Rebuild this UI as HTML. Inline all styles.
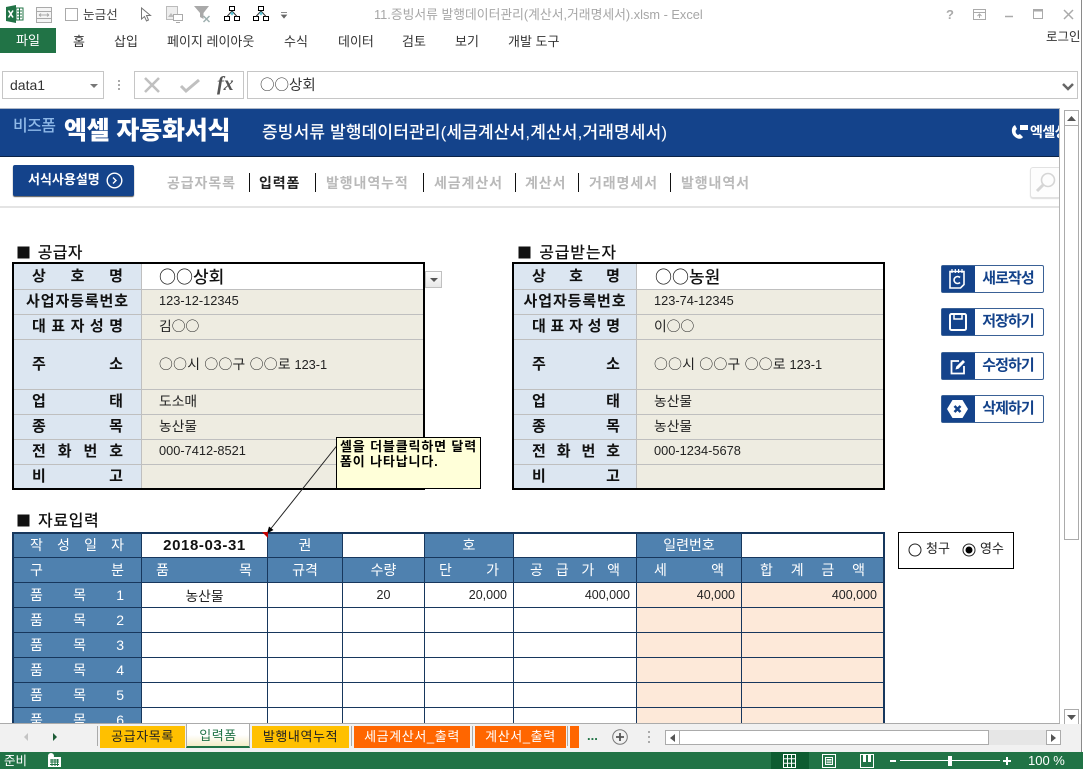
<!DOCTYPE html>
<html lang="ko"><head><meta charset="utf-8"><title>Excel</title>
<style>
html,body{margin:0;padding:0;width:1083px;height:769px;overflow:hidden;background:#fff}
body{position:relative;font-family:"Liberation Sans","Noto Sans CJK KR",sans-serif;font-size:12px;color:#222}
.a{position:absolute;white-space:nowrap}
.k{font-family:"Noto Sans CJK KR",sans-serif}
svg{position:absolute;overflow:visible}
.rb{top:34px;font-size:13px;color:#333;line-height:16px}
.nv{top:174px;font-size:14px;font-weight:700;color:#b9b9b9;letter-spacing:.9px;line-height:18px}
.sp{top:173px;width:1px;height:19px;background:#111}
.sec{font-size:16px;font-weight:500;color:#111;line-height:18px;letter-spacing:.3px}
.sec .k{font-size:15px;margin-right:2px;margin-left:-1px;letter-spacing:0}
table{border-collapse:separate;border-spacing:0;table-layout:fixed;position:absolute}
.t1{left:12px;top:262px;width:413px;height:228px;box-sizing:border-box;border:2px solid #000;overflow:hidden;position:absolute;background:#eeece1}
.t1 table{left:0;top:0}
.t1 td{box-sizing:border-box;border-bottom:1px solid #bfbfbf;padding:0;font-size:12.800px;line-height:16px;color:#222}
.t1 td .k{font-size:13.800px;line-height:16px}
.t1 td.l{background:#dce6f1;border-right:1px solid #bfbfbf;font-size:15px;font-weight:700;color:#111;text-align:justify;text-align-last:justify}
.t1 td.l.c{text-align:center;text-align-last:center;padding:0!important;letter-spacing:.9px}
.t1 td.v{padding:0 0 2px 17px}
.t1 td.b{background:#fff;font-size:17px;font-weight:500;color:#111;font-family:"Noto Sans CJK KR",sans-serif}
.t3w{left:12px;top:532px;width:873px;height:192px;overflow:hidden;position:absolute}
.t3{left:0;top:0;border:solid #17375d;border-width:2px 2px 0 2px}
.t3 td{box-sizing:border-box;height:25px;border-right:1px solid #17375d;border-bottom:1px solid #17375d;padding:0 0 1px;font-size:12.500px;color:#222;text-align:center;background:#fff}
.t3 tr:first-child td{height:24px}
.t3 td:last-child{border-right:0}
.t3 td.h{background:#4f81af;color:#fff;font-size:14px}
.t3 td.j{text-align:justify;text-align-last:justify;padding:0 17px 1px 16px;letter-spacing:0}
.t3 td.s{text-align:justify;text-align-last:justify;padding:0 15px 1px 14px}
.t3 td.r{text-align:right;padding-right:6px}
.t3 td.p{background:#fde9d9}
.btn{left:941px;width:103px;height:28px;box-sizing:border-box;border:1px solid #3a6196;border-radius:2px;background:#fff}
.btn i{position:absolute;left:0;top:0;width:33px;height:26px;background:#14438b;display:block}
.btn b{position:absolute;left:33px;right:0;top:0;line-height:25px;text-align:center;font-size:15px;font-weight:700;color:#14438b;letter-spacing:-.9px;padding-right:2px}
.tab{top:726px;height:22px;line-height:21px;text-align:center;font-size:13px;letter-spacing:.6px}
.y{background:#ffc000;color:#222}.o{background:#ff6600;color:#fff}
.sb{background:#fff;border:1px solid #ababab;box-sizing:border-box}
</style></head><body>

<!-- title bar -->
<svg style="left:6px;top:5px" width="18" height="18" viewBox="0 0 18 18"><path d="M0 2 10 0v18L0 16z" fill="#217346"/><path d="M10 3h7v12h-7z" fill="#fff" stroke="#217346"/><path d="M11 6h5M11 9h5M11 12h5M13.500 3v12" stroke="#217346" fill="none"/><path d="M2.500 5.500 7 12.500M7 5.500 2.500 12.500" stroke="#fff" stroke-width="1.600"/></svg>
<svg style="left:36px;top:7px" width="16" height="16" viewBox="0 0 16 16"><path d="M.5.5h15v15H.5z" fill="#f5f5f5" stroke="#aaa"/><path d="M.5 4.500h15M.5 11.500h15M3 8h10M3 8l2-1.500M3 8l2 1.500M13 8l-2-1.500M13 8l-2 1.500" stroke="#aaa" fill="none"/></svg>
<div class="a" style="left:65px;top:8px;width:13px;height:13px;box-sizing:border-box;border:1px solid #aaa;background:#fff"></div>
<div class="a" style="left:83px;top:7px;font-size:12.600px;line-height:16px;color:#444">눈금선</div>
<svg style="left:140px;top:7px" width="12" height="16" viewBox="0 0 12 16"><path d="M1.500 1v11l3-2.500 2 4.500 2-1-2-4.500h4z" fill="#fff" stroke="#777"/></svg>
<svg style="left:166px;top:6px" width="17" height="17" viewBox="0 0 17 17"><path d="M.5.5h11v13H.5z" fill="#eee" stroke="#bbb"/><path d="M2 11l3-4 3 4z" fill="#bbb"/><path d="M7.500 8.500h9v6h-9z" fill="#fff" stroke="#aaa"/><path d="M10 16.500h4" stroke="#aaa"/></svg>
<svg style="left:194px;top:6px" width="17" height="17" viewBox="0 0 17 17"><path d="M0 0h15l-5.500 7v6L6 11V7z" fill="#a9a9a9"/><path d="M9.500 10l6 6M15.500 10l-6 6" stroke="#9fb0b0" stroke-width="1.500"/></svg>
<svg style="left:224px;top:6px" width="16" height="15" viewBox="0 0 16 15"><g fill="#fff" stroke="#000"><path d="M5.500.5h5v4h-5zM.5 10.500h5v4h-5zM10.500 10.500h5v4h-5z"/></g><path d="M8 5 3 10.500M8 5l5 5.500" stroke="#333" fill="none"/><path d="M8 5.500l2 2-2 2-2-2z" fill="#5fc4d6"/></svg>
<svg style="left:253px;top:6px" width="16" height="15" viewBox="0 0 16 15"><g fill="#fff" stroke="#000"><path d="M5.500.5h5v4h-5zM.5 10.500h5v4h-5zM10.500 10.500h5v4h-5z"/></g><path d="M8 5 3 10.500M8 5l5 5.500" stroke="#333" fill="none"/><path d="M8 5.500l2 2-2 2-2-2z" fill="#5fc4d6"/></svg>
<svg style="left:281px;top:12px" width="6" height="7" viewBox="0 0 6 7"><path d="M0 .5h6M.5 3h5L3 6z" stroke="#666" stroke-width=".8" fill="#666"/></svg>
<div class="a" style="left:374px;top:7px;font-size:12.800px;line-height:16px;color:#a6a6a6">11.증빙서류 발행데이터관리(계산서,거래명세서).xlsm - Excel</div>
<svg style="left:945px;top:8px" width="128" height="14" viewBox="0 0 128 14" fill="none" stroke="#aaa"><text x="1" y="11" font-size="13" font-weight="700" fill="#aaa" stroke="none" font-family="Liberation Sans">?</text><path d="M28.500 1.500h12v10h-12zM28.500 4.500h12M34.500 10V6M32.500 8l2-2 2 2"/><path d="M60 8.500h8" stroke-width="1.500"/><path d="M88.500 1.500h9v9h-9z"/><path d="M88 2.500h10" stroke-width="2"/><path d="M119 2l9 9M128 2l-9 9" stroke-width="1.500"/></svg>

<!-- ribbon tabs -->
<div class="a" style="left:0;top:28px;width:56px;height:25px;background:#217346;color:#fff;text-align:center;line-height:25px;font-size:13px">파일</div>
<div class="a rb" style="left:73px">홈</div>
<div class="a rb" style="left:114px">삽입</div>
<div class="a rb" style="left:167px">페이지 레이아웃</div>
<div class="a rb" style="left:284px">수식</div>
<div class="a rb" style="left:338px">데이터</div>
<div class="a rb" style="left:402px">검토</div>
<div class="a rb" style="left:455px">보기</div>
<div class="a rb" style="left:508px">개발 도구</div>
<div class="a" style="left:1046px;top:29px;font-size:12.500px;line-height:16px;color:#333">로그인</div>
<div class="a" style="left:1081px;top:0;width:1px;height:769px;background:#8a8a8a"></div>

<!-- formula bar -->
<div class="a" style="left:2px;top:71px;width:102px;height:28px;box-sizing:border-box;border:1px solid #c6c6c6;background:#fff;font-size:14px;line-height:26px;padding-left:7px;color:#333">data1</div>
<svg style="left:90px;top:84px" width="8" height="4" viewBox="0 0 8 4"><path d="M0 0h8L4 4z" fill="#777"/></svg>
<div class="a" style="left:118px;top:80px;width:2px;height:11px;background:repeating-linear-gradient(#aaa 0 2px,transparent 2px 4px)"></div>
<div class="a" style="left:134px;top:71px;width:110px;height:28px;box-sizing:border-box;border:1px solid #c6c6c6;background:#fff"></div>
<svg style="left:143px;top:77px" width="18" height="16" viewBox="0 0 18 16"><path d="M2 1l14 14M16 1 2 15" stroke="#c0c0c0" stroke-width="2.600" fill="none"/></svg>
<svg style="left:180px;top:78px" width="20" height="15" viewBox="0 0 20 15"><path d="M1 8l5 5L19 2" stroke="#c0c0c0" stroke-width="3" fill="none"/></svg>
<div class="a" style="left:217px;top:70px;font-family:'Liberation Serif',serif;font-style:italic;font-weight:700;font-size:20px;line-height:28px;color:#555">fx</div>
<div class="a k" style="left:247px;top:71px;width:831px;height:28px;box-sizing:border-box;border:1px solid #c6c6c6;background:#fff;font-size:14.500px;line-height:25px;padding-left:12px;color:#333">○○상회</div>
<svg style="left:1062px;top:83px" width="12" height="8" viewBox="0 0 12 8"><path d="M1 1l5 5 5-5" stroke="#666" stroke-width="2.500" fill="none"/></svg>

<!-- sheet header -->
<div class="a" style="left:0;top:108px;width:1059px;height:1px;background:#aeb8c8"></div>
<div class="a" style="left:0;top:109px;width:1059px;height:48px;background:#14438b;overflow:hidden">
  <div class="a" style="left:13px;top:8px;font-size:16px;font-weight:500;color:#8fb9e8;line-height:20px;letter-spacing:-.6px">비즈폼</div>
  <div class="a" style="left:64px;top:4px;font-size:25px;font-weight:900;color:#fff;line-height:36px;letter-spacing:-.2px">엑셀 자동화서식</div>
  <div class="a" style="left:262px;top:13px;font-size:17px;font-weight:500;color:#fff;line-height:22px;letter-spacing:.15px">증빙서류 발행데이터관리(세금계산서,계산서,거래명세서)</div>
  <svg style="left:1010px;top:15px" width="19" height="17" viewBox="0 0 19 17"><path d="M5 1C1 3 1 9 4 12s7 4 9 1l-3-3-2 1C6 10 5 8 6 6l1-1z" fill="#fff"/><path d="M10 1h8v5h-8z" fill="#fff"/></svg>
  <div class="a" style="left:1030px;top:12px;font-size:14px;font-weight:700;color:#fff;line-height:22px;letter-spacing:-.5px">엑셀상담</div>
</div>
<div class="a" style="left:0;top:156px;width:1059px;height:1px;background:#0b2347"></div>

<!-- nav -->
<div class="a" style="left:13px;top:165px;width:121px;height:31px;border-radius:2px;background:#14438b;box-shadow:0 1px 1px #555;color:#fff;font-size:13px;font-weight:700;line-height:29px;padding-left:15px;box-sizing:border-box;letter-spacing:0">서식사용설명</div>
<svg style="left:106px;top:172px" width="17" height="17" viewBox="0 0 17 17"><circle cx="8.500" cy="8.500" r="7.300" fill="none" stroke="#fff" stroke-width="1.400"/><path d="M7 5.500l3 3-3 3" fill="none" stroke="#fff" stroke-width="1.400"/></svg>
<div class="a nv" style="left:167px">공급자목록</div><div class="a sp" style="left:249px"></div>
<div class="a nv" style="left:259px;color:#222">입력폼</div><div class="a sp" style="left:315px"></div>
<div class="a nv" style="left:326px">발행내역누적</div><div class="a sp" style="left:423px"></div>
<div class="a nv" style="left:434px">세금계산서</div><div class="a sp" style="left:515px"></div>
<div class="a nv" style="left:525px">계산서</div><div class="a sp" style="left:578px"></div>
<div class="a nv" style="left:589px">거래명세서</div><div class="a sp" style="left:670px"></div>
<div class="a nv" style="left:681px">발행내역서</div>
<div class="a" style="left:1030px;top:167px;width:29px;height:31px;box-sizing:border-box;border:1px solid #e2e2e2;border-right:0;border-radius:3px 0 0 3px;box-shadow:0 1px 1px #ddd;background:#fdfdfd"></div>
<svg style="left:1036px;top:172px" width="20" height="21" viewBox="0 0 20 21"><circle cx="12" cy="8" r="6.500" fill="none" stroke="#d5d5d5" stroke-width="1.600"/><path d="M7 13l-6 6" stroke="#d5d5d5" stroke-width="3"/></svg>
<div class="a" style="left:0;top:206px;width:1059px;height:2px;background:#e4e4e4"></div>

<!-- supplier -->
<div class="a sec" style="left:17px;top:244px"><span class="k">■</span> 공급자</div>
<div class="t1">
<table style="width:409px"><colgroup><col style="width:128px"><col></colgroup>
<tr style="height:26px"><td class="l" style="padding:0 18px">상 호 명</td><td class="v b">○○상회</td></tr>
<tr style="height:25px"><td class="l c">사업자등록번호</td><td class="v">123-12-12345</td></tr>
<tr style="height:25px"><td class="l" style="padding:0 18px">대 표 자 성 명</td><td class="v"><span class="k">김○○</span></td></tr>
<tr style="height:50px"><td class="l" style="padding:0 18px">주 소</td><td class="v"><span class="k" style="letter-spacing:.3px">○○시 ○○구 ○○로</span> 123-1</td></tr>
<tr style="height:25px"><td class="l" style="padding:0 18px">업 태</td><td class="v"><span class="k">도소매</span></td></tr>
<tr style="height:25px"><td class="l" style="padding:0 18px">종 목</td><td class="v"><span class="k">농산물</span></td></tr>
<tr style="height:25px"><td class="l" style="padding:0 18px">전 화 번 호</td><td class="v">000-7412-8521</td></tr>
<tr style="height:23px"><td class="l" style="padding:0 18px;border-bottom:0">비 고</td><td class="v" style="border-bottom:0"></td></tr>
</table></div>
<div class="a" style="left:425px;top:271px;width:17px;height:17px;box-sizing:border-box;border:1px solid #c0c0c0;background:linear-gradient(#fff,#e8e8e8)"></div>
<svg style="left:430px;top:278px" width="8" height="4" viewBox="0 0 8 4"><path d="M0 0h8L4 4z" fill="#555"/></svg>

<!-- receiver -->
<div class="a sec" style="left:518px;top:244px;letter-spacing:.8px"><span class="k">■</span> 공급받는자</div>
<div class="t1" style="left:512px;width:373px">
<table style="width:369px"><colgroup><col style="width:123px"><col></colgroup>
<tr style="height:26px"><td class="l" style="padding:0 16px 0 18px">상 호 명</td><td class="v b" style="padding-left:18px">○○농원</td></tr>
<tr style="height:25px"><td class="l c">사업자등록번호</td><td class="v">123-74-12345</td></tr>
<tr style="height:25px"><td class="l" style="padding:0 16px 0 18px">대 표 자 성 명</td><td class="v"><span class="k">이○○</span></td></tr>
<tr style="height:50px"><td class="l" style="padding:0 16px 0 18px">주 소</td><td class="v"><span class="k" style="letter-spacing:.3px">○○시 ○○구 ○○로</span> 123-1</td></tr>
<tr style="height:25px"><td class="l" style="padding:0 16px 0 18px">업 태</td><td class="v"><span class="k">농산물</span></td></tr>
<tr style="height:25px"><td class="l" style="padding:0 16px 0 18px">종 목</td><td class="v"><span class="k">농산물</span></td></tr>
<tr style="height:25px"><td class="l" style="padding:0 16px 0 18px">전 화 번 호</td><td class="v">000-1234-5678</td></tr>
<tr style="height:23px"><td class="l" style="padding:0 16px 0 18px;border-bottom:0">비 고</td><td class="v" style="border-bottom:0"></td></tr>
</table></div>

<!-- side buttons -->
<div class="a btn" style="top:265px"><i></i><b>새로작성</b></div>
<svg style="left:948px;top:268px" width="19" height="22" viewBox="0 0 19 22" fill="none" stroke="#fff" stroke-width="1.600"><path d="M2 3.500h14v13l-3.500 3.500H2z"/><path d="M4 1v4M7.300 1v4M10.600 1v4M14 1v4" stroke-width="1.200"/><path d="M12 9.500a3.500 3.500 0 1 0 0 5"/></svg>
<div class="a btn" style="top:308px"><i></i><b>저장하기</b></div>
<svg style="left:949px;top:313px" width="18" height="18" viewBox="0 0 18 18" fill="none" stroke="#fff" stroke-width="2"><path d="M1 2.500A1.500 1.500 0 0 1 2.500 1h13A1.500 1.500 0 0 1 17 2.500v13a1.500 1.500 0 0 1-1.500 1.500h-13A1.500 1.500 0 0 1 1 15.500z"/><path d="M5 1v5h8V1" stroke-width="1.500"/></svg>
<div class="a btn" style="top:352px"><i></i><b>수정하기</b></div>
<svg style="left:950px;top:358px" width="17" height="17" viewBox="0 0 17 17" fill="none" stroke="#fff" stroke-width="1.800"><path d="M9 3H1.500v12.500H14V8"/><path d="M5.500 11.500l.8-3L13 2l2 2-6.500 6.700z" fill="#fff" stroke="none"/></svg>
<div class="a btn" style="top:395px"><i></i><b>삭제하기</b></div>
<svg style="left:947px;top:400px" width="21" height="18" viewBox="0 0 21 18"><path d="M5.500 0h10L21 9l-5.500 9h-10L0 9z" fill="#fff"/><path d="M7.500 6l6 6M13.500 6l-6 6" stroke="#14438b" stroke-width="2.600"/></svg>

<!-- data table -->
<div class="a sec" style="left:17px;top:512px;letter-spacing:.6px"><span class="k">■</span> 자료입력</div>
<div class="t3w">
<table class="t3" style="width:873px"><colgroup><col style="width:128px"><col style="width:126px"><col style="width:75px"><col style="width:82px"><col style="width:89px"><col style="width:123px"><col style="width:105px"><col></colgroup>
<tr><td class="h j">작 성 일 자</td><td style="font-size:15px;font-weight:700;color:#111;letter-spacing:.6px">2018-03-31</td><td class="h">권</td><td></td><td class="h">호</td><td></td><td class="h">일련번호</td><td></td></tr>
<tr><td class="h j">구 분</td><td class="h s">품 목</td><td class="h">규격</td><td class="h">수량</td><td class="h s" style="padding:0 14px 1px">단 가</td><td class="h s" style="padding:0 16px 1px">공 급 가 액</td><td class="h s" style="padding:0 17px 1px">세 액</td><td class="h s" style="padding:0 18px 1px">합 계 금 액</td></tr>
<tr><td class="h j">품 목 1</td><td style="font-size:13.800px">농산물</td><td></td><td>20</td><td class="r">20,000</td><td class="r">400,000</td><td class="r p">40,000</td><td class="r p">400,000</td></tr>
<tr><td class="h j">품 목 2</td><td></td><td></td><td></td><td></td><td></td><td class="p"></td><td class="p"></td></tr>
<tr><td class="h j">품 목 3</td><td></td><td></td><td></td><td></td><td></td><td class="p"></td><td class="p"></td></tr>
<tr><td class="h j">품 목 4</td><td></td><td></td><td></td><td></td><td></td><td class="p"></td><td class="p"></td></tr>
<tr><td class="h j">품 목 5</td><td></td><td></td><td></td><td></td><td></td><td class="p"></td><td class="p"></td></tr>
<tr><td class="h j">품 목 6</td><td></td><td></td><td></td><td></td><td></td><td class="p"></td><td class="p"></td></tr>
</table></div>

<!-- radio group -->
<div class="a" style="left:898px;top:532px;width:116px;height:37px;box-sizing:border-box;border:1px solid #000;background:#fff"></div>
<svg style="left:908px;top:543px" width="70" height="14" viewBox="0 0 70 14"><circle cx="7" cy="7" r="6" fill="#fff" stroke="#222"/><circle cx="61" cy="7" r="6" fill="#fff" stroke="#222"/><circle cx="61" cy="7" r="3.500" fill="#000"/></svg>
<div class="a" style="left:926px;top:541px;font-size:13px;line-height:16px;color:#222">청구</div>
<div class="a" style="left:980px;top:541px;font-size:13px;line-height:16px;color:#222">영수</div>

<!-- comment -->
<svg style="left:262px;top:437px" width="90" height="102" viewBox="0 0 90 102"><path d="M81 1 7 94" stroke="#222" fill="none"/><path d="M5 96.500l2-7 4.500 3.500z" fill="#000"/><path d="M0 95h6v6z" fill="#c00000"/></svg>
<div class="a" style="left:336px;top:437px;width:145px;height:52px;box-sizing:border-box;border:1px solid #000;background:#ffffd9;padding:1px 0 0 3px;font-size:13px;font-weight:700;line-height:15px;color:#000;white-space:nowrap;letter-spacing:.85px">셀을 더블클릭하면 달력<br>폼이 나타납니다.</div>

<!-- sheet frame + vertical scroll -->
<div class="a" style="left:1059px;top:108px;width:1px;height:616px;background:#b5b5b5"></div>
<div class="a" style="left:1060px;top:100px;width:21px;height:632px;background:#fff"></div>
<div class="a sb" style="left:1064px;top:110px;width:15px;height:430px"></div>
<div class="a sb" style="left:1064px;top:110px;width:15px;height:16px"></div>
<svg style="left:1067px;top:116px" width="9" height="5" viewBox="0 0 9 5"><path d="M0 5h9L4.500 0z" fill="#555"/></svg>
<div class="a sb" style="left:1064px;top:709px;width:15px;height:16px"></div>
<svg style="left:1067px;top:715px" width="9" height="5" viewBox="0 0 9 5"><path d="M0 0h9L4.500 5z" fill="#555"/></svg>

<!-- tab strip -->
<div class="a" style="left:0;top:723px;width:1060px;height:1px;background:#ababab"></div>
<div class="a" style="left:0;top:724px;width:1081px;height:28px;background:#f1f1f1"></div>
<svg style="left:24px;top:732px" width="34" height="10" viewBox="0 0 34 10"><path d="M4 1v8L0 5z" fill="#c4c4c4"/><path d="M29 1v8l4-4z" fill="#1d5c37"/></svg>
<div class="a" style="left:97px;top:726px;width:1px;height:20px;background:#aaa"></div>
<div class="a tab y" style="left:100px;width:85px">공급자목록</div>
<div class="a" style="left:186px;top:723px;width:64px;height:25px;box-sizing:border-box;background:linear-gradient(#fff 50%,#f5edc8);border:1px solid #ababab;border-bottom:2px solid #217346;text-align:center;line-height:24px;font-size:13px;color:#217346;letter-spacing:.5px">입력폼</div>
<div class="a tab y" style="left:252px;width:97px">발행내역누적</div>
<div class="a" style="left:351px;top:726px;width:1px;height:20px;background:#aaa"></div>
<div class="a tab o" style="left:354px;width:116px">세금계산서_출력</div>
<div class="a" style="left:472px;top:726px;width:1px;height:20px;background:#aaa"></div>
<div class="a tab o" style="left:475px;width:91px">계산서_출력</div>
<div class="a" style="left:567px;top:726px;width:1px;height:20px;background:#aaa"></div>
<div class="a tab o" style="left:570px;width:9px"></div>
<div class="a" style="left:587px;top:729px;font-size:13px;font-weight:700;line-height:14px;color:#217346">...</div>
<svg style="left:612px;top:729px" width="16" height="16" viewBox="0 0 16 16"><circle cx="8" cy="8" r="7.300" fill="none" stroke="#777" stroke-width="1"/><path d="M8 4v8M4 8h8" stroke="#555" stroke-width="1.800"/></svg>
<div class="a" style="left:648px;top:731px;width:2px;height:13px;background:repeating-linear-gradient(#aaa 0 2px,transparent 2px 5px)"></div>
<div class="a" style="left:665px;top:730px;width:395px;height:15px;background:#e6e6e6"></div>
<div class="a sb" style="left:665px;top:730px;width:15px;height:15px"></div>
<svg style="left:670px;top:734px" width="5" height="8" viewBox="0 0 5 8"><path d="M5 0v8L0 4z" fill="#555"/></svg>
<div class="a sb" style="left:679px;top:730px;width:310px;height:15px"></div>
<div class="a sb" style="left:1046px;top:730px;width:15px;height:15px"></div>
<svg style="left:1051px;top:734px" width="5" height="8" viewBox="0 0 5 8"><path d="M0 0v8l5-4z" fill="#555"/></svg>

<!-- status bar -->
<div class="a" style="left:0;top:752px;width:1083px;height:17px;background:#217346"></div>
<div class="a" style="left:4px;top:753px;font-size:12.500px;line-height:16px;color:#fff">준비</div>
<svg style="left:47px;top:753px" width="15" height="15" viewBox="0 0 15 15"><circle cx="4" cy="3" r="3" fill="#fff"/><path d="M1 4h13v10H1z" fill="#fff"/><path d="M3 7h9M3 9h9M3 11.500h9M5 6v7M8 6v7M10.500 6v7" stroke="#217346" fill="none"/></svg>
<div class="a" style="left:771px;top:752px;width:38px;height:17px;background:#0e5c31"></div>
<svg style="left:783px;top:754px" width="90" height="14" viewBox="0 0 90 14" fill="none" stroke="#fff"><path d="M.5.500h12v13H.5zM.5 4.800h12M.5 9.200h12M4.500.500v13M8.500.500v13"/><path d="M39.500.500h13v13h-13zM42.500 3.500h7v7h-7zM43.500 5.500h5M43.500 7h5M43.500 8.800h5"/><path d="M77.500.500h13v13h-13z"/><path d="M80 1h3v7h-3zM85 1h3v7h-3z" fill="#fff" stroke="none"/></svg>
<div class="a" style="left:890px;top:760px;width:6px;height:2px;background:#fff"></div>
<div class="a" style="left:900px;top:760px;width:100px;height:1px;background:#fff"></div>
<div class="a" style="left:948px;top:756px;width:4px;height:10px;background:#fff"></div>
<svg style="left:1002px;top:756px" width="10" height="10" viewBox="0 0 10 10"><path d="M5 1v8M1 5h8" stroke="#fff" stroke-width="2"/></svg>
<div class="a" style="left:1028px;top:753px;font-size:13px;line-height:16px;color:#fff">100 %</div>
</body></html>
